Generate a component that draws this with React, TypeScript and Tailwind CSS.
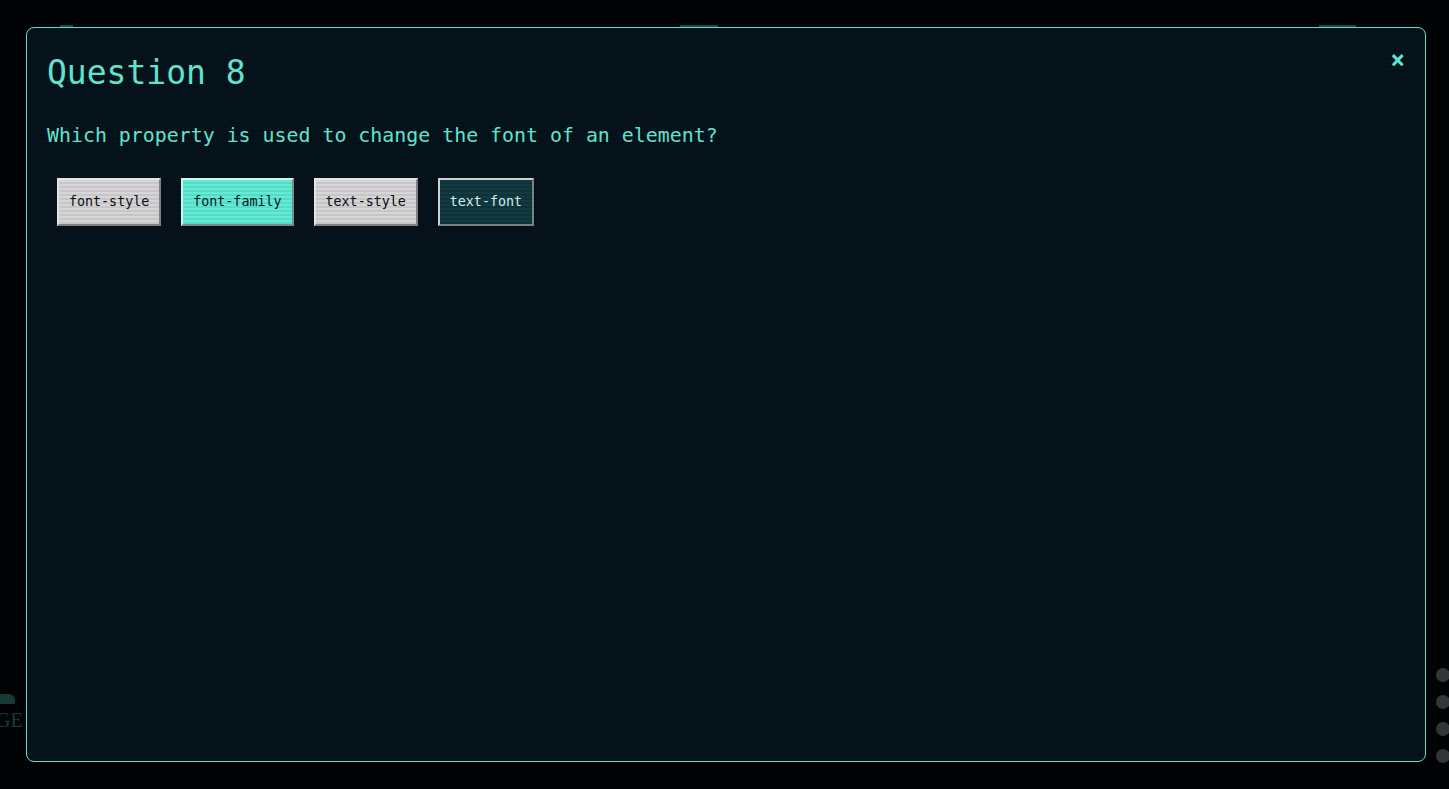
import { useState } from "react";

const options = ["font-style", "font-family", "text-style", "text-font"];

// scanline backgrounds, written out in full so tailwind picks them up
const modalBg =
	"bg-[repeating-linear-gradient(180deg,#06131b_0px,#06131b_2px,#04101a_2px,#04101a_4px)]";
const greyBg =
	"bg-[repeating-linear-gradient(180deg,#d6d6d6_0px,#d6d6d6_2px,#c6c6c8_2px,#c6c6c8_4px)]";
const tealBg =
	"bg-[repeating-linear-gradient(180deg,#66ead4_0px,#66ead4_2px,#55dcc8_2px,#55dcc8_4px)]";
const darkBg =
	"bg-[repeating-linear-gradient(180deg,#113a42_0px,#113a42_2px,#0d3239_2px,#0d3239_4px)]";

function OptionButton({
	label,
	state,
	onClick,
}: {
	label: string;
	state: "idle" | "selected" | "hover";
	onClick: () => void;
}) {
	const look =
		state === "selected"
			? `${tealBg} text-[#0a161e] border-t-[#c8f4ec] border-l-[#c8f4ec] border-r-[#7f8a88] border-b-[#7f8a88]`
			: state === "hover"
			? `${darkBg} text-[#d8ece8] border-t-[#d0d0d0] border-l-[#d0d0d0] border-r-[#7e7e7e] border-b-[#7e7e7e]`
			: `${greyBg} text-[#0a0e14] border-t-[#e4e4e4] border-l-[#e4e4e4] border-r-[#808080] border-b-[#808080]`;

	return (
		<button
			onClick={onClick}
			className={`h-[48px] px-[10px] border-2 border-solid text-[13.33px] leading-none ${look}`}
		>
			{label}
		</button>
	);
}

export default function App() {
	const [selected, setSelected] = useState("font-family");

	return (
		<div className="relative w-[1449px] h-[789px] overflow-hidden bg-[#020305] pl-[26px] pt-[27px] font-['DejaVu_Sans_Mono',monospace]">
			{/* things behind the overlay */}
			<div className="absolute left-[60px] top-[25px] w-[13px] h-[2px] bg-[#1d4a44]" />
			<div className="absolute left-[680px] top-[25px] w-[38px] h-[2px] bg-[#1d4a44]" />
			<div className="absolute left-[1319px] top-[25px] w-[37px] h-[2px] bg-[#1d4a44]" />
			<div className="absolute left-0 top-[694px] w-[15px] h-[10px] bg-[#173a36] rounded-tr-[6px]" />
			<div className="absolute left-[-4px] top-[710px] text-[20px] leading-none text-[#1c3b37] font-['Liberation_Serif',serif]">
				GE
			</div>
			<div className="absolute left-[1436px] top-[668px] flex flex-col gap-[13px]">
				<div className="w-[14px] h-[14px] rounded-full bg-[#333538]" />
				<div className="w-[14px] h-[14px] rounded-full bg-[#333538]" />
				<div className="w-[14px] h-[14px] rounded-full bg-[#333538]" />
				<div className="w-[14px] h-[14px] rounded-full bg-[#333538]" />
			</div>

			{/* modal */}
			<div
				className={`relative w-[1400px] h-[735px] rounded-[8px] border border-[#5fe0cc] ${modalBg} px-[20px] pt-[26px]`}
			>
				<button className="absolute right-[20px] top-[20px] text-[24px] leading-none font-bold text-[#5fe6d0]">
					×
				</button>

				<h2 className="text-[33px] leading-[1.17] text-[#5fe3cf]">Question 8</h2>
				<p className="mt-[31px] text-[19.9px] leading-[1.17] text-[#5fe3cf]">
					Which property is used to change the font of an element?
				</p>

				<div className="mt-[31px] ml-[10px] flex gap-[20px]">
					{options.map((opt) => (
						<OptionButton
							key={opt}
							label={opt}
							state={
								opt === selected ? "selected" : opt === "text-font" ? "hover" : "idle"
							}
							onClick={() => setSelected(opt)}
						/>
					))}
				</div>
			</div>
		</div>
	);
}
